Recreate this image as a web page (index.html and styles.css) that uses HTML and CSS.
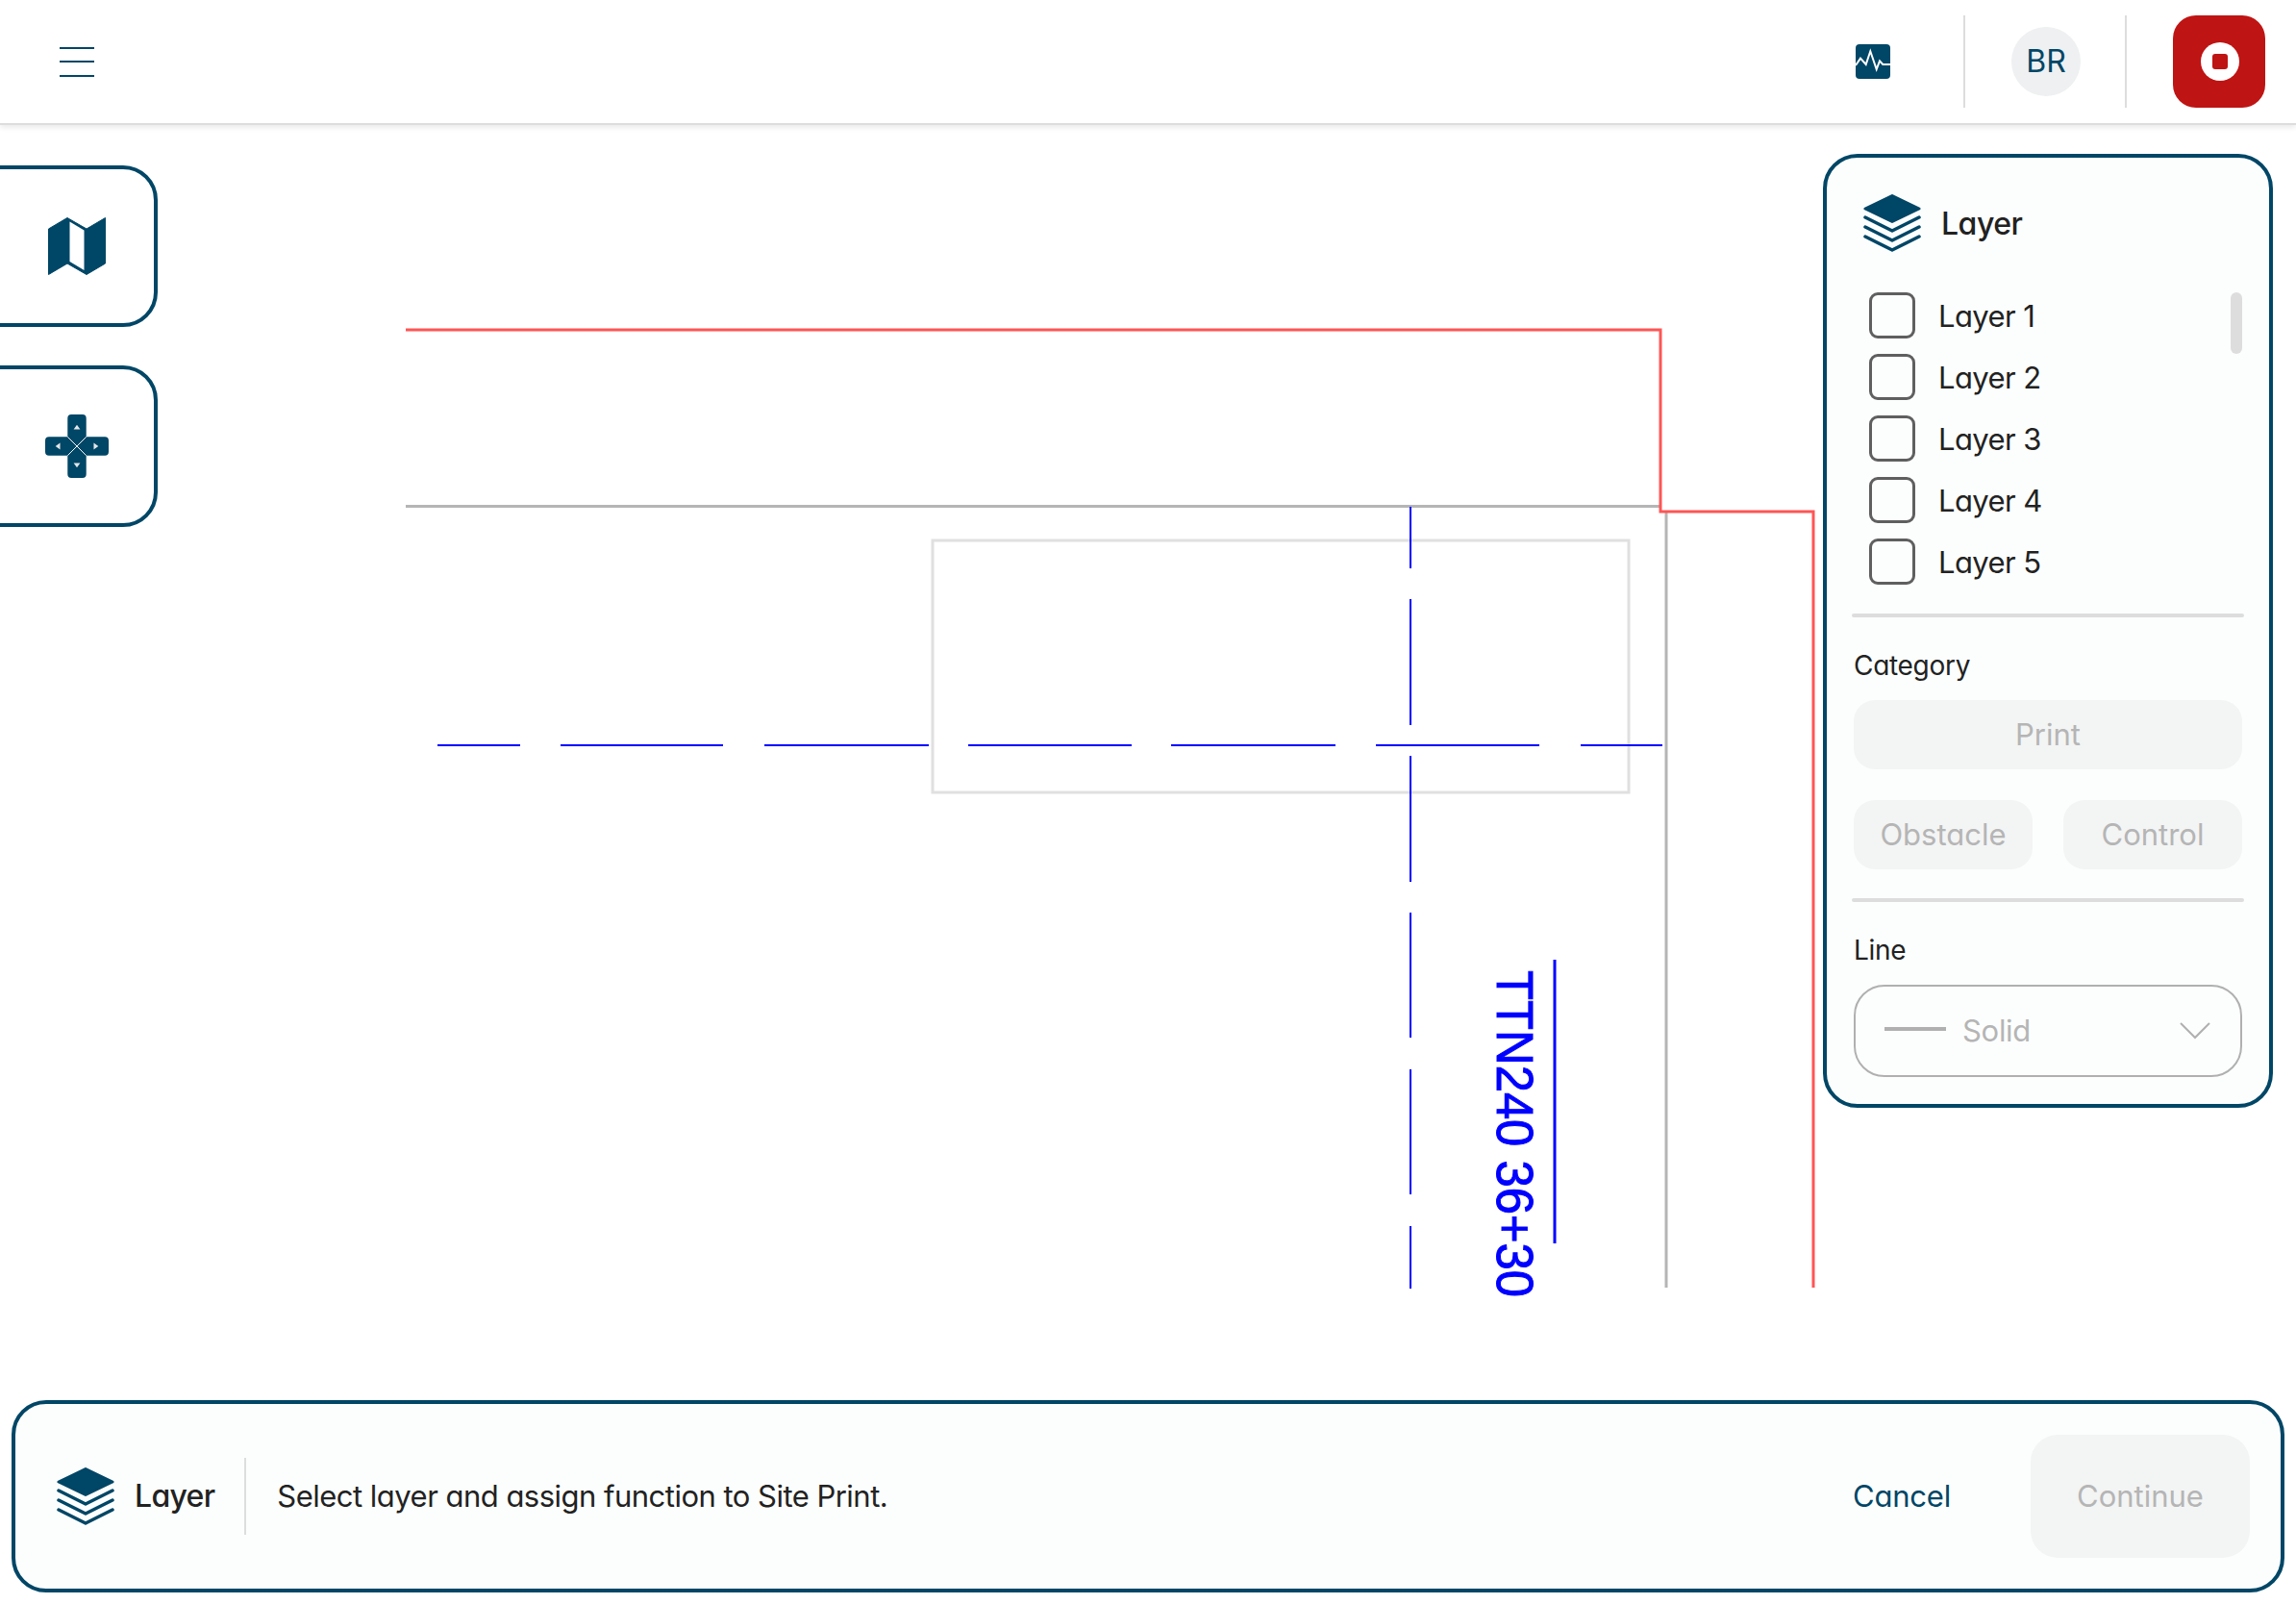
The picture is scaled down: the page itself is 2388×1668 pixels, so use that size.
FILE: index.html
```html
<!DOCTYPE html>
<html lang="en">
<head>
<meta charset="utf-8">
<title>Site Print Layer</title>
<link rel="stylesheet" href="styles.css">
</head>
<body>
<header class="topbar">
  <button class="menu" aria-label="Menu"><span></span><span></span><span></span></button>
  <svg class="pulse" viewBox="0 0 36 36"><rect width="36" height="36" rx="4" fill="#004666"/><path d="M0 22 5 14.7 10.7 21 15.3 7.3 21.7 26 25 17.3 28.3 21H36" fill="none" stroke="#fff" stroke-width="2"/></svg>
  <i class="vsep first"></i>
  <div class="avatar">BR</div>
  <i class="vsep second"></i>
  <button class="stop" aria-label="Stop"><span class="stop-ring"><span class="stop-square"></span></span></button>
</header>
<main class="stage">
  <svg class="drawing" viewBox="0 128 2388 1540">
    <rect class="ln-pale" x="970" y="562" width="724" height="262"/>
    <path class="ln-grey" d="M422 526.500H1727M1733 533V1339"/>
    <path class="ln-red" d="M422 343H1727V532H1886V1339"/>
    <path class="ln-blue" d="M455 775H541M583 775H752M795 775H966M1007 775H1177M1218 775H1389M1431 775H1601M1644 775H1729"/>
    <path class="ln-blue" d="M1467 527V591M1467 623V754M1467 786V917M1467 949V1079M1467 1112V1242M1467 1275V1340"/>
    <path class="ln-blue thick" d="M1617 998V1293"/>
    <text class="cad-text" transform="translate(1557 1009) rotate(90)" textLength="340" lengthAdjust="spacingAndGlyphs">TTN240 36+30</text>
  </svg>

  <nav class="tools">
    <button class="tool" aria-label="Map">
      <svg width="60" height="60" viewBox="0 0 60 60"><path d="M0.5 12 20 0.5 40 12 59.5 0.5V48L40 59.5 20 48 0.5 59.500Z" fill="#004666" stroke="#004666" stroke-linejoin="round"/><path d="M22.500 4.500 37.500 13.500V55L22.500 46Z" fill="#fff"/></svg>
    </button>
    <button class="tool" aria-label="Move">
      <svg width="66" height="66" viewBox="0 0 68 68">
        <path d="M28 0H40A4 4 0 0 1 44 4V24H64A4 4 0 0 1 68 28V40A4 4 0 0 1 64 44H44V64A4 4 0 0 1 40 68H28A4 4 0 0 1 24 64V44H4A4 4 0 0 1 0 40V28A4 4 0 0 1 4 24H24V4A4 4 0 0 1 28 0Z" fill="#004666"/>
        <path d="M24 24 44 44M44 24 24 44" stroke="#fff" stroke-width="1"/>
        <path d="M34 11 37.500 16H30.500ZM34 57 30.500 52H37.500ZM11 34 16 30.500V37.500ZM57 34 52 37.500V30.500Z" fill="#e4e6e8"/>
      </svg>
    </button>
  </nav>

  <aside class="panel">
    <div class="panel-head">
      <svg class="layers" viewBox="0 0 60 60"><path d="M30 1.500 58 15 30 28.500 2 15Z" fill="#004666" stroke="#004666" stroke-width="3" stroke-linejoin="round"/><path d="M2 24 30 38 58 24M2 34 30 48 58 34M2 44 30 58 58 44" fill="none" stroke="#004666" stroke-width="3.500" stroke-linecap="round" stroke-linejoin="round"/></svg>
      <h2 class="title panel-title">Layer</h2>
    </div>
    <div class="list">
      <ul class="rows">
        <li class="row"><span class="box"></span>Layer 1</li>
        <li class="row"><span class="box"></span>Layer 2</li>
        <li class="row"><span class="box"></span>Layer 3</li>
        <li class="row"><span class="box"></span>Layer 4</li>
        <li class="row"><span class="box"></span>Layer 5</li>
      </ul>
      <span class="thumb"></span>
    </div>
    <hr class="rule">
    <div class="label">Category</div>
    <div class="chip wide">Print</div>
    <div class="chips">
      <div class="chip">Obstacle</div>
      <div class="chip">Control</div>
    </div>
    <hr class="rule">
    <div class="label">Line</div>
    <div class="select">
      <span class="swatch"></span>
      <span class="select-text">Solid</span>
      <svg class="chevron" width="32" height="18" viewBox="0 0 32 18"><path d="M1 1 16 16 31 1" fill="none" stroke="#b0b0b0" stroke-width="2"/></svg>
    </div>
  </aside>

  <footer class="bar">
    <svg class="layers" viewBox="0 0 60 60"><path d="M30 1.500 58 15 30 28.500 2 15Z" fill="#004666" stroke="#004666" stroke-width="3" stroke-linejoin="round"/><path d="M2 24 30 38 58 24M2 34 30 48 58 34M2 44 30 58 58 44" fill="none" stroke="#004666" stroke-width="3.500" stroke-linecap="round" stroke-linejoin="round"/></svg>
    <h2 class="title bar-title">Layer</h2>
    <i class="bar-sep"></i>
    <p class="message">Select layer and assign function to Site Print.</p>
    <button class="cancel">Cancel</button>
    <button class="continue">Continue</button>
  </footer>
</main>
</body>
</html>
```
FILE: styles.css
```css
* { box-sizing: border-box; }
html, body { margin: 0; padding: 0; }
body {
  width: 2388px;
  height: 1668px;
  overflow: hidden;
  background: #fff;
  color: #222;
  font-family: Inter, "Noto Sans", sans-serif;
  font-feature-settings: "cv11" 1;
  font-size: 31px;
}
button { font: inherit; font-feature-settings: inherit; border: 0; background: none; padding: 0; }
h2, p, ul { margin: 0; padding: 0; }

.topbar {
  position: relative;
  z-index: 2;
  height: 130px;
  padding: 0 32px 0 62px;
  display: flex;
  align-items: center;
  background: #fff;
  border-bottom: 2px solid #ddd;
  box-shadow: 0 2px 6px rgba(0, 0, 0, .1);
}
.menu { width: 36px; height: 31px; display: flex; flex-direction: column; justify-content: space-between; }
.menu span { display: block; height: 2px; background: #004666; }
.pulse { width: 36px; height: 36px; margin-left: auto; }
.vsep { width: 2px; height: 96px; background: #ddd; }
.vsep.first { margin: 0 48px 0 76px; }
.vsep.second { margin: 0 48px 0 46px; }
.avatar {
  width: 72px; height: 72px; border-radius: 50%;
  background: #eef0f1; color: #004666;
  display: flex; align-items: center; justify-content: center;
  font-size: 32px; padding-bottom: 2px;
}
.stop {
  width: 96px; height: 96px; border-radius: 24px; background: #bf1414;
  display: flex; align-items: center; justify-content: center;
}
.stop-ring { width: 40px; height: 40px; margin-left: 2px; border-radius: 50%; background: #fff; display: flex; align-items: center; justify-content: center; }
.stop-square { width: 16px; height: 16px; border-radius: 3px; background: #bf1414; }

.stage { position: relative; height: 1538px; }
.drawing { position: absolute; left: 0; top: -2px; width: 2388px; height: 1540px; overflow: visible; }
.ln-pale, .ln-grey, .ln-red, .ln-blue { fill: none; }
.ln-pale { stroke: #e0e0e0; stroke-width: 3; }
.ln-grey { stroke: #b5b5b5; stroke-width: 3; }
.ln-red { stroke: #f55; stroke-width: 3; }
.ln-blue { stroke: #00f; stroke-width: 2; }
.ln-blue.thick { stroke-width: 3; }
.cad-text { font-family: "Liberation Sans", Arial, sans-serif; font-size: 54px; fill: #00f; stroke: #00f; stroke-width: 1; font-feature-settings: normal; }

.tools { position: absolute; left: -40px; top: 42px; display: flex; flex-direction: column; gap: 40px; }
.tool {
  width: 204px; height: 168px;
  padding-left: 36px;
  background: #fff;
  border: 4px solid #004666;
  border-radius: 36px;
  display: flex; align-items: center; justify-content: center;
}

.panel {
  position: absolute;
  left: 1896px; top: 30px;
  width: 468px; height: 992px;
  padding: 38px 28px 28px;
  background: #fcfefd;
  border: 4px solid #004666;
  border-radius: 36px;
  display: flex; flex-direction: column;
}
.panel-head { display: flex; align-items: center; gap: 21px; margin: 0 0 42px 10px; }
.layers { width: 60px; height: 60px; flex: none; }
.title { font-size: 32px; font-weight: 500; line-height: 40px; letter-spacing: -.5px; color: #222; }
.panel-title { padding-top: 2px; }
.list { display: flex; justify-content: space-between; align-items: flex-start; }
.rows { list-style: none; margin-left: 16px; display: flex; flex-direction: column; gap: 16px; }
.row { display: flex; align-items: center; gap: 24px; height: 48px; font-size: 31px; letter-spacing: -.6px; }
.box { width: 48px; height: 48px; border: 3px solid #5f5f5f; border-radius: 9px; }
.thumb { width: 12px; height: 64px; border-radius: 6px; background: #ddd; }
.rule { height: 4px; margin: 30px -2px; border: 0; border-radius: 2px; background: #ddd; flex: none; }
.label { font-size: 28px; line-height: 40px; margin-bottom: 16px; letter-spacing: -.3px; }
.chip {
  height: 72px; flex: 1;
  padding-bottom: 2px;
  display: flex; align-items: center; justify-content: center;
  border-radius: 22px; background: #f3f4f4; color: #b5b5b5;
  font-size: 31px;
}
.chip.wide { flex: none; }
.chips { display: flex; gap: 32px; margin-top: 32px; }
.select {
  height: 96px;
  padding: 0 31px 0 30px;
  display: flex; align-items: center;
  border: 2px solid #b0b0b0; border-radius: 32px;
  color: #b5b5b5;
}
.swatch { width: 64px; height: 4px; background: #b0b0b0; margin: -4px 17px 0 0; }
.select-text { letter-spacing: -.3px; padding-bottom: 2px; }
.chevron { margin-left: auto; }

.bar {
  position: absolute;
  left: 12px; top: 1326px;
  width: 2364px; height: 200px;
  padding: 0 32px 0 43px;
  background: #fcfefd;
  border: 4px solid #004666;
  border-radius: 36px;
  display: flex; align-items: center;
}
.bar-title { margin-left: 21px; letter-spacing: -.7px; }
.bar-sep { width: 2px; height: 80px; background: #ddd; margin: 0 32px 0 31px; }
.message { font-size: 31px; letter-spacing: -.52px; padding-bottom: 2px; }
.cancel { margin-left: auto; margin-right: 83px; color: #004666; font-size: 31px; letter-spacing: -.2px; padding-bottom: 2px; }
.continue { width: 228px; height: 128px; border-radius: 28px; background: #f3f4f4; color: #b5b5b5; font-size: 31px; padding-bottom: 2px; }
```
